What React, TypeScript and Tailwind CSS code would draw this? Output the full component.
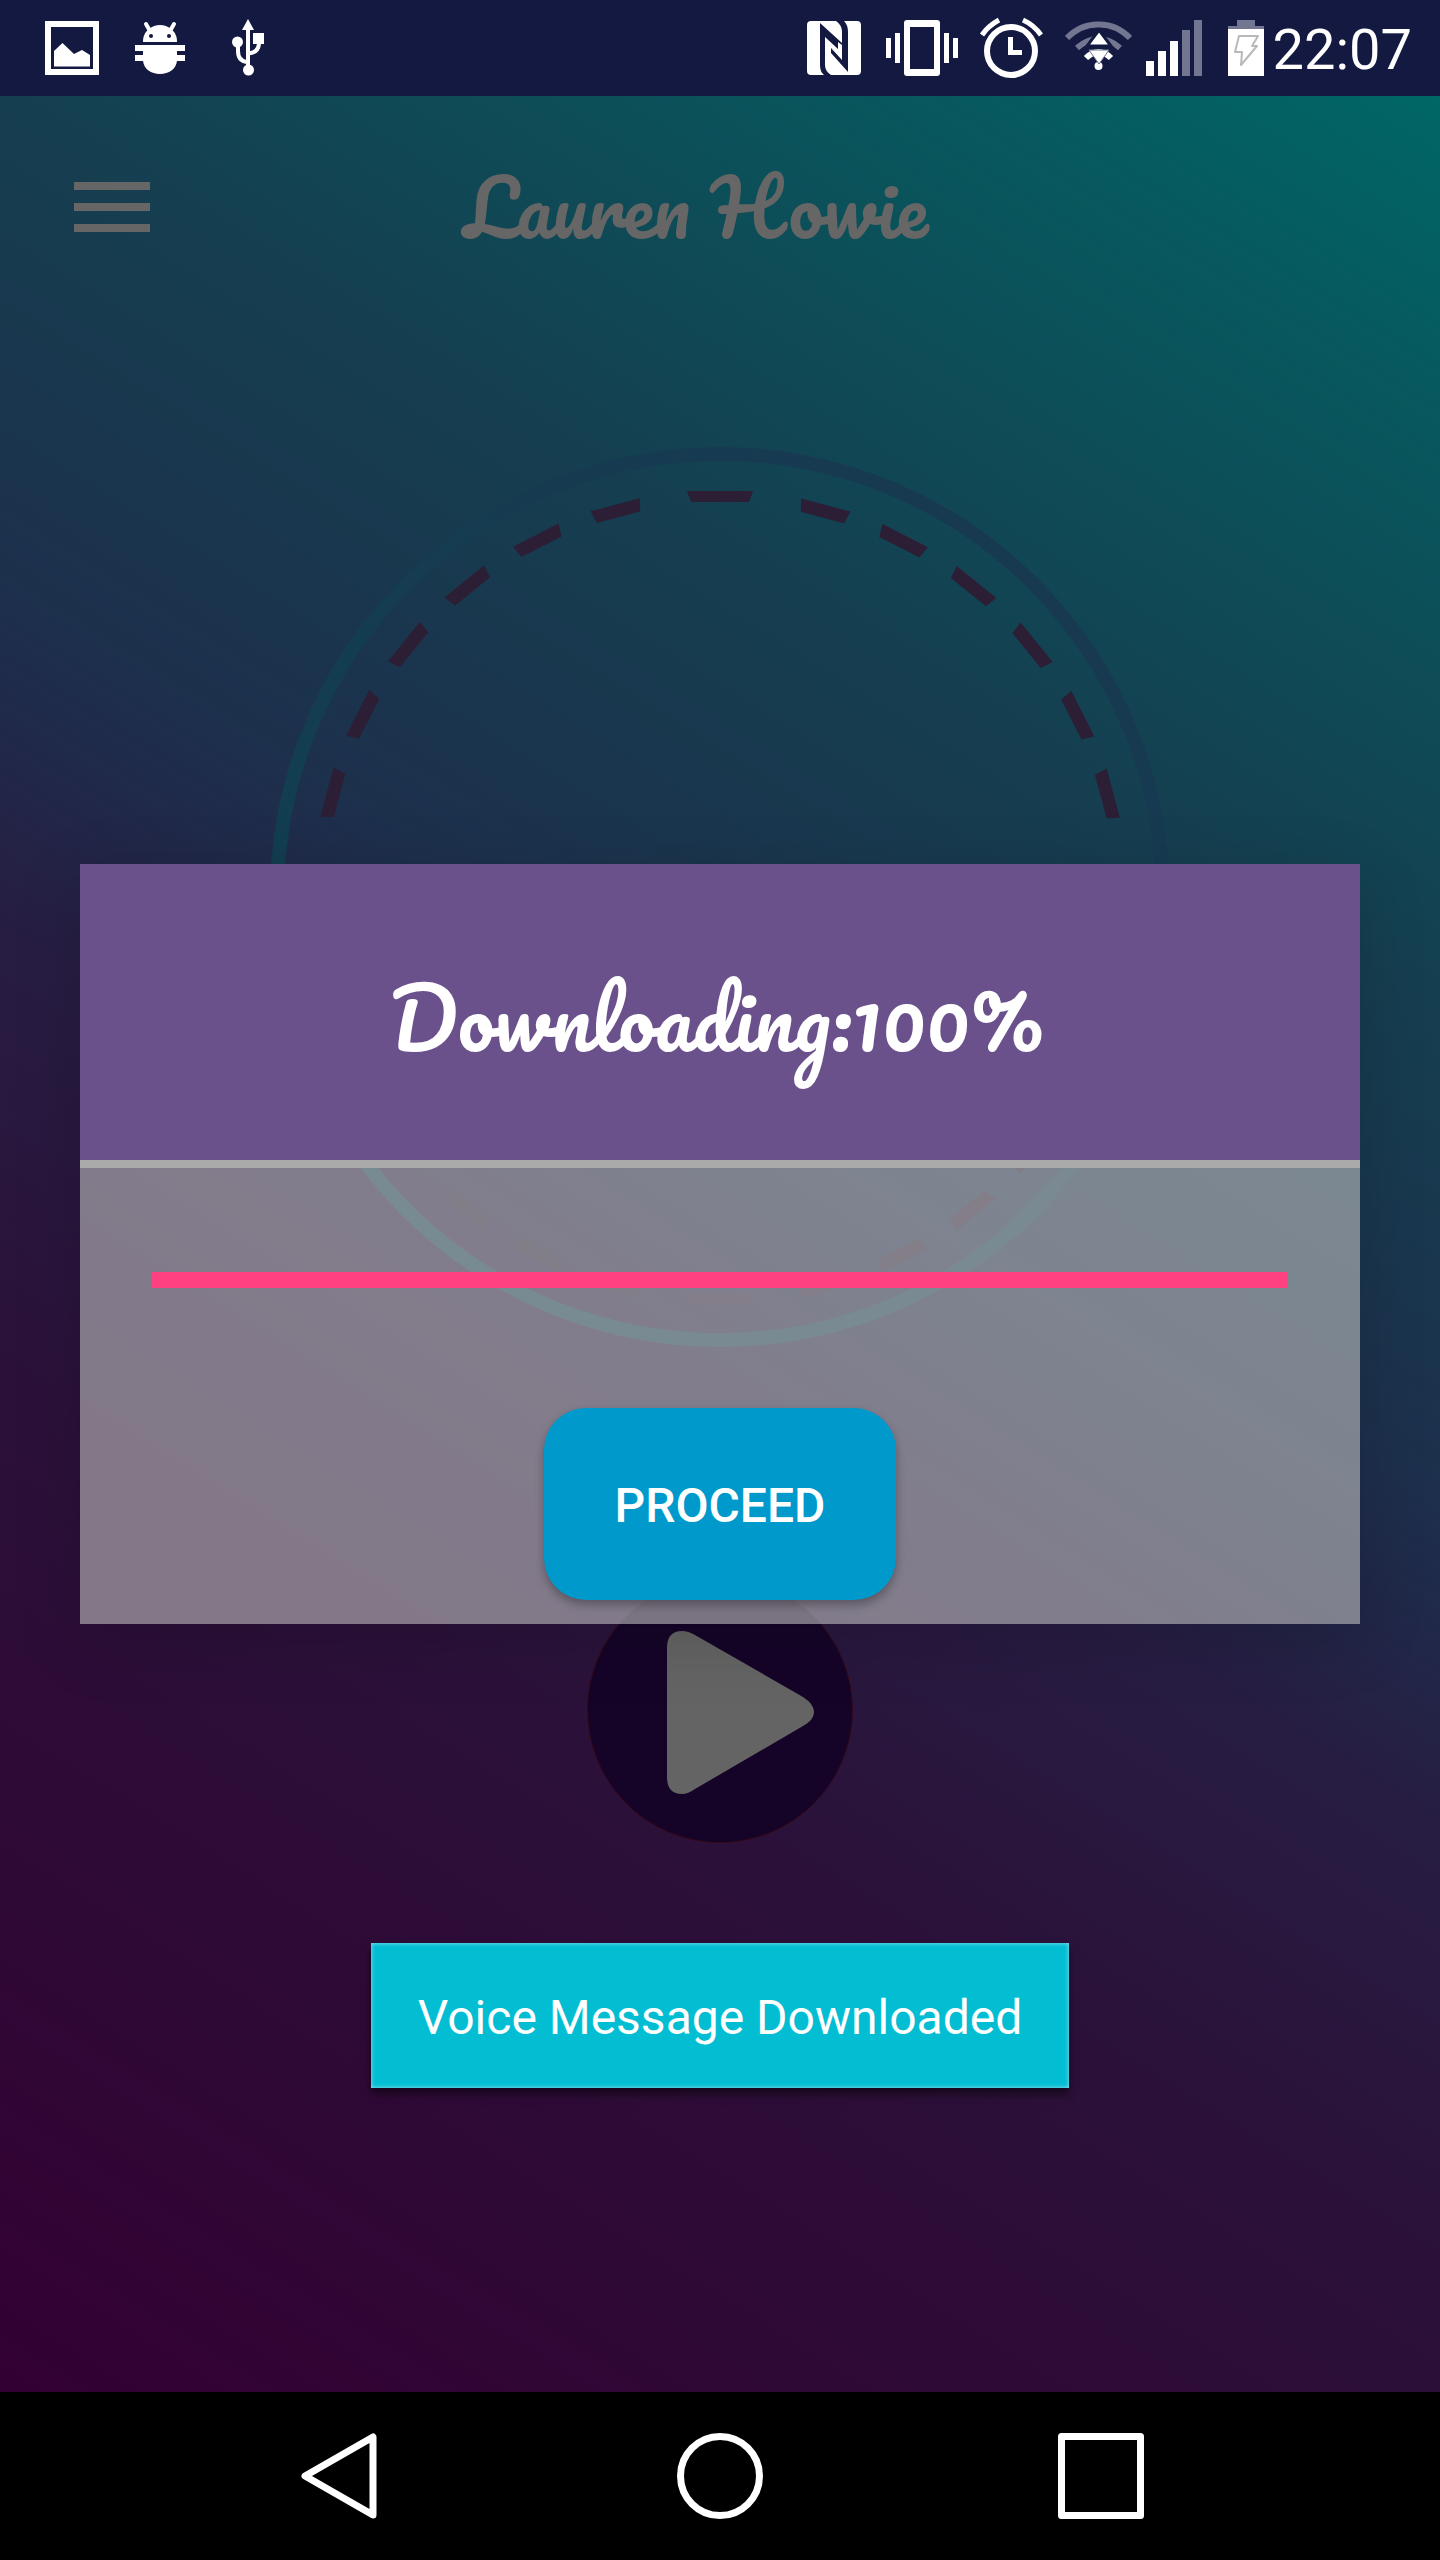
import React from "react";

const DASH_ANGLES = [0, 15, 27, 39, 51, 63, 75];

function StatusBar() {
  return (
    <div className="flex h-24 items-center justify-between bg-[#141941] pr-7 pl-11 text-white">
      <div className="flex items-center">
        <svg width="56" height="58" viewBox="44 19 56 58" fill="currentColor" role="img" aria-label="Screenshot saved">
          <path fillRule="evenodd" d="M45 21H99V75H45ZM51 27V69H93V27Z" />
          <path d="M54 51 62.500 43 74 54 82 50 90 55V66.500H54Z" />
        </svg>
        <svg className="ml-8" width="56" height="58" viewBox="132 19 56 58" fill="currentColor" role="img" aria-label="Debugging">
          <path d="M143 42C143 36 145 32 149 29C152 26.500 156 25 160 25S168 26.500 171 29C175 32 177 36 177 42Z" />
          <path d="M146 24 150 31M174 24 170 31" stroke="currentColor" strokeWidth="4" strokeLinecap="round" />
          <circle cx="151" cy="36" r="2" fill="#141941" />
          <circle cx="169" cy="36" r="2" fill="#141941" />
          <path d="M135 45H185V51H177V55H185V61H177C176 69 169 74 160 74S144 69 143 61H135V55H143V51H135Z" />
        </svg>
        <svg className="ml-10" width="40" height="58" viewBox="228 19 40 58" fill="currentColor" role="img" aria-label="USB connected">
          <path d="M248 19 254 30H242Z" />
          <path d="M248 28V70M238 42V51Q238 61 247 62M259 40V44Q258 53 248 53.500" fill="none" stroke="currentColor" strokeWidth="4" />
          <circle cx="237.500" cy="42" r="5.500" />
          <circle cx="248.500" cy="70" r="5.500" />
          <path d="M253 33H264V44H253Z" />
        </svg>
      </div>
      <div className="flex items-center">
        <svg width="54" height="58" viewBox="808 19 54 58" fill="currentColor" role="img" aria-label="NFC">
          <path d="M812 21H837Q843 25 843 32V43L821 23V65Q821 72 825 75H812Q808 75 808 71V25Q808 21 812 21Z" />
          <path d="M845 21H858Q862 21 862 25V71Q862 75 858 75H832Q826 71 826 65V37L839 49V42L843 45V60L832 48V53L849 72V32Q849 25 845 21Z" />
        </svg>
        <svg className="ml-6" width="74" height="58" viewBox="886 19 74 58" fill="currentColor" role="img" aria-label="Vibrate">
          <path fillRule="evenodd" d="M908 20H938Q941 20 941 23V73Q941 76 938 76H908Q905 76 905 73V23Q905 20 908 20ZM911 27V69H935V27Z" />
          <path d="M887 38H892V58H887ZM896 33H901V63H896ZM945 33H950V63H945ZM954 38H959V58H954Z" />
        </svg>
        <svg className="ml-5" width="64" height="62" viewBox="979 18 64 62" fill="none" stroke="currentColor" role="img" aria-label="Alarm set">
          <circle cx="1011" cy="52" r="24" strokeWidth="6" />
          <path d="M1010.500 38V53.500H1022" strokeWidth="5" />
          <path d="M982 36Q988 27 999 21M1023 21Q1034 26 1041 36" strokeWidth="5" />
        </svg>
        <svg className="ml-[22px]" width="68" height="58" viewBox="1066 19 68 58" fill="none" role="img" aria-label="Wi-Fi">
          <path d="M1068 38Q1082 24 1099.500 24.500Q1117 24 1131 38M1078 48Q1088 39 1099.500 39Q1111 39 1121 48" stroke="#737690" strokeWidth="6" />
          <path d="M1087 58Q1093 52 1099.500 52Q1106 52 1112 58" stroke="#ffffff" strokeWidth="6" />
          <circle cx="1099.500" cy="66" r="4" fill="#ffffff" />
          <path d="M1100 30 1112 46H1088Z" fill="#ffffff" stroke="#141941" strokeWidth="3" />
          <path d="M1090 50H1110L1100 64Z" fill="#ffffff" stroke="#737690" strokeWidth="1" />
          <path d="M1088 47.500H1112" stroke="#141941" strokeWidth="3" />
        </svg>
        <svg className="ml-3" width="58" height="58" viewBox="1146 19 58 58" role="img" aria-label="Signal strength">
          <path d="M1147 61H1155V76H1147ZM1159 51H1167V76H1159ZM1171 41H1179V76H1171Z" fill="#ffffff" />
          <path d="M1183 30H1191V76H1183ZM1195 20H1203V76H1195Z" fill="#737690" />
        </svg>
        <svg className="ml-6" width="38" height="58" viewBox="1228 19 38 58" role="img" aria-label="Battery charging">
          <path d="M1238 20H1256V26H1265V29H1229V26H1238Z" fill="#737690" />
          <path d="M1229 29H1265V76H1229Z" fill="#ffffff" />
          <path d="M1240 36H1259L1253 46H1258L1242 65L1243 52H1236Z" fill="none" stroke="#b9b9b9" strokeWidth="2" strokeLinejoin="round" />
        </svg>
        <time className="ml-2 pt-1 text-[56px] leading-none">22:07</time>
      </div>
    </div>
  );
}

function MessageRing() {
  const angles = DASH_ANGLES.flatMap((a) => (a === 0 ? [0, 180] : [a, -a, 180 - a, 180 + a]));
  return (
    <svg className="mt-32 h-[902px] w-[902px]" viewBox="0 0 902 902" fill="none" aria-hidden="true">
      <defs>
        <linearGradient id="ring" x1="0" y1="1" x2="1" y2="0">
          <stop offset="0" stopColor="#0f3f50" />
          <stop offset="0.5" stopColor="#153c51" />
          <stop offset="1" stopColor="#183951" />
        </linearGradient>
        <linearGradient id="dash" gradientUnits="userSpaceOnUse" x1="250" y1="850" x2="600" y2="650">
          <stop offset="0" stopColor="#2a1a34" />
          <stop offset="1" stopColor="#2c1f35" />
        </linearGradient>
      </defs>
      <circle cx="451" cy="451" r="443" stroke="url(#ring)" strokeWidth="14" />
      {angles.map((a) => (
        <path
          key={a}
          d={a % 180 === 0 ? "M418 45H484L480 56H422Z" : "M426 45H477L474 58H429Z"}
          fill={a > 180 && a < 270 ? "#261f36" : "#2c1f35"}
          transform={`rotate(${a} 451 452)`}
        />
      ))}
    </svg>
  );
}

function DownloadDialog() {
  return (
    <section
      role="dialog"
      aria-labelledby="download-title"
      className="absolute inset-x-20 top-[768px] shadow-[0_16px_64px_rgba(0,0,0,0.15)]"
    >
      <h2
        id="download-title"
        className="flex h-[296px] items-center justify-center bg-[#6a518c] pt-3 pr-2 font-['Pacifico',cursive] text-[81px] text-white"
      >
        Downloading:100%
      </h2>
      <div className="h-2 bg-[#aaaaaa]" />
      <div className="flex flex-col items-center bg-[#bebebe]/60 px-[72px] pt-[104px] pb-6">
        <progress
          aria-label="Download progress"
          value={100}
          max={100}
          className="block h-4 w-full appearance-none bg-[#ff4081] [&::-webkit-progress-bar]:bg-transparent [&::-webkit-progress-value]:bg-[#ff4081]"
        />
        <button
          type="button"
          className="mt-[120px] h-48 w-[352px] rounded-[42px] bg-[#0099cc] pt-1 text-[48px] font-medium text-white shadow-[0_5px_10px_rgba(0,0,0,0.3)]"
        >
          PROCEED
        </button>
      </div>
    </section>
  );
}

function NavigationBar() {
  return (
    <nav className="flex h-[168px] items-center justify-between bg-black px-[296px] text-white">
      <button type="button" aria-label="Back">
        <svg width="86" height="88" viewBox="0 0 86 88" fill="none" stroke="currentColor" strokeWidth="7" strokeLinejoin="round">
          <path d="M77 5V83L9 44Z" />
        </svg>
      </button>
      <button type="button" aria-label="Home">
        <svg width="86" height="88" viewBox="0 0 86 88" fill="none" stroke="currentColor" strokeWidth="7">
          <circle cx="43" cy="44" r="39.500" />
        </svg>
      </button>
      <button type="button" aria-label="Recent apps">
        <svg width="86" height="88" viewBox="0 0 86 88" fill="none" stroke="currentColor" strokeWidth="7" strokeLinejoin="round">
          <path d="M3.500 4.500H82.500V83.500H3.500Z" />
        </svg>
      </button>
    </nav>
  );
}

export default function App() {
  return (
    <div className="flex min-h-screen flex-col font-['Roboto',sans-serif]">
      <StatusBar />
      <main className="relative flex grow flex-col items-center bg-[linear-gradient(32deg,#330033_0%,#2e0a36_18%,#2b1139_32%,#271d43_46%,#222547_50%,#1d2f4c_56%,#153f50_72%,#006666_100%)] pb-20">
        <header className="flex h-[222px] w-full items-center pr-[198px] pl-[74px]">
          <button type="button" aria-label="Open menu" className="flex w-[76px] flex-col gap-[13px]">
            <span className="h-2 w-full bg-[#666666]" />
            <span className="h-2 w-full bg-[#666666]" />
            <span className="h-2 w-full bg-[#666666]" />
          </button>
          <h1 className="grow text-center font-['Pacifico',cursive] text-[77px] text-[#666666]">
            Lauren Howie
          </h1>
        </header>
        <MessageRing />
        <button type="button" aria-label="Play voice message" className="mt-[229px]">
          <svg width="266" height="266" viewBox="0 0 266 266">
            <circle cx="133" cy="133" r="132.500" fill="#150428" stroke="#350817" strokeWidth="1" />
            <path
              d="M80 71Q80 54 95 54Q101 54 108 58L216 120Q227 127 227 135T216 149L108 212Q101 217 95 217Q80 217 80 200Z"
              fill="#646464"
            />
          </svg>
        </button>
        <div
          role="status"
          className="mt-[100px] bg-[#03bed3] px-[47px] pt-[46px] pb-[42px] text-[48px] leading-[57px] text-white shadow-[inset_0_0_4px_rgba(255,255,255,0.6),0_6px_8px_rgba(0,0,0,0.5)]"
        >
          Voice Message Downloaded
        </div>
        <DownloadDialog />
      </main>
      <NavigationBar />
    </div>
  );
}
